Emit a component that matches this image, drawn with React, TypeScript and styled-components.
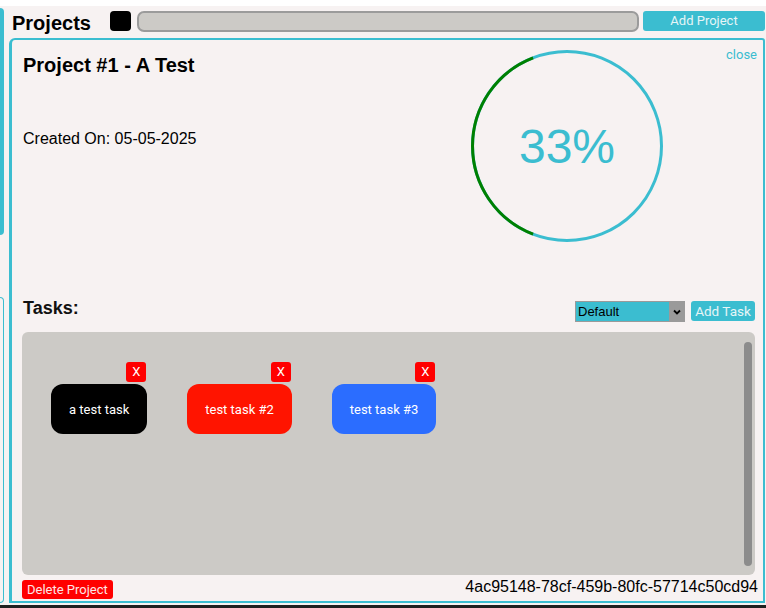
import styled, { createGlobalStyle } from "styled-components";

const CYAN = "#3bbdd0";
const PAPER = "#f7f2f2";

const tasks = [
  { id: 1, name: "a test task", color: "#000000" },
  { id: 2, name: "test task #2", color: "#ff1400" },
  { id: 3, name: "test task #3", color: "#2b6dff" },
];

const GlobalStyle = createGlobalStyle`
  body {
    margin: 0;
    background: #ffffff;
    font-family: "Liberation Sans", Arial, sans-serif;
  }
`;

const App = () => {
  return (
    <>
      <GlobalStyle />
      <StyledPage>
        <StyledBody>
          <StyledRail>
            <StyledRailFill />
            <StyledRailOutline />
          </StyledRail>
          <StyledColumn>
            <StyledHeader>
              <StyledTitle>Projects</StyledTitle>
              <StyledSwatch />
              <StyledSearch />
              <StyledButton width={122}>Add Project</StyledButton>
            </StyledHeader>
            <StyledModal>
              <StyledTop>
                <StyledInfo>
                  <StyledProjectName>Project #1 - A Test</StyledProjectName>
                  <StyledCreated>Created On: 05-05-2025</StyledCreated>
                </StyledInfo>
                <StyledRing>
                  <svg width="200" height="200" viewBox="0 0 200 200">
                    <circle cx="100" cy="100" r="94.5" fill="none" stroke={CYAN} strokeWidth="3" />
                    <path
                      d="M 66.1 11.8 A 94.5 94.5 0 0 0 66.1 188.2"
                      fill="none"
                      stroke="#008000"
                      strokeWidth="3"
                    />
                  </svg>
                  <StyledPercent>33%</StyledPercent>
                </StyledRing>
                <StyledClose>close</StyledClose>
              </StyledTop>
              <StyledTasksHeader>
                <StyledTasksTitle>Tasks:</StyledTasksTitle>
                <StyledSelect>
                  <span>Default</span>
                  <StyledSelectArrow>
                    <svg width="8" height="6" viewBox="0 0 8 6">
                      <path d="M1 1.5 L4 4.5 L7 1.5" fill="none" stroke="#000" strokeWidth="1.8" />
                    </svg>
                  </StyledSelectArrow>
                </StyledSelect>
                <StyledAddTask width={64}>Add Task</StyledAddTask>
              </StyledTasksHeader>
              <StyledTaskArea>
                <StyledTaskList>
                  {tasks.map((task) => (
                    <StyledTaskItem key={task.id}>
                      <StyledRemove>X</StyledRemove>
                      <StyledCard color={task.color}>{task.name}</StyledCard>
                    </StyledTaskItem>
                  ))}
                </StyledTaskList>
                <StyledScrollThumb />
              </StyledTaskArea>
              <StyledFooter>
                <StyledDelete>Delete Project</StyledDelete>
                <StyledUuid>4ac95148-78cf-459b-80fc-57714c50cd94</StyledUuid>
              </StyledFooter>
            </StyledModal>
          </StyledColumn>
        </StyledBody>
        <StyledBottomBar />
      </StyledPage>
    </>
  );
};

const StyledPage = styled.div`
  height: 608px;
  display: flex;
  flex-direction: column;
  padding-top: 6px;
  box-sizing: border-box;
`;

const StyledBody = styled.div`
  flex: 1;
  display: flex;
  background: ${PAPER};
  min-height: 0;
`;

const StyledRail = styled.div`
  width: 4px;
  display: flex;
  flex-direction: column;
  padding-top: 2px;
`;

const StyledRailFill = styled.div`
  height: 227px;
  background: ${CYAN};
  border-radius: 0 4px 4px 0;
`;

const StyledRailOutline = styled.div`
  flex: 1;
  margin-top: 62px;
  margin-bottom: 2px;
  border: 1px solid ${CYAN};
  border-left: none;
  border-radius: 0 5px 5px 0;
`;

const StyledColumn = styled.div`
  flex: 1;
  display: flex;
  flex-direction: column;
  padding-left: 5px;
  margin-right: 1px;
  min-width: 0;
`;

const StyledHeader = styled.div`
  height: 32px;
  display: flex;
  align-items: flex-start;
  padding-top: 5px;
  padding-left: 3px;
  box-sizing: border-box;
`;

const StyledTitle = styled.h1`
  margin: 0;
  font-size: 20px;
  line-height: 24px;
  font-weight: bold;
  color: #000;
`;

const StyledSwatch = styled.div`
  width: 21px;
  height: 20px;
  margin-left: 19px;
  background: #000;
  border-radius: 4px;
`;

const StyledSearch = styled.div`
  flex: 1;
  height: 21px;
  margin: 0 4px 0 6px;
  background: #cccac6;
  border: 2px solid #9b9b9b;
  border-radius: 7px;
  box-sizing: border-box;
`;

const StyledButton = styled.div<{ width: number }>`
  width: ${({ width }) => width}px;
  height: 20px;
  background: ${CYAN};
  color: #e6f5f7;
  font-family: Roboto, "Liberation Sans", sans-serif;
  font-size: 13px;
  line-height: 20px;
  text-align: center;
  border-radius: 3px;
`;

const StyledAddTask = styled(StyledButton)`
  margin-top: 4px;
  font-size: 13.5px;
`;

const StyledModal = styled.div`
  flex: 1;
  display: flex;
  flex-direction: column;
  border: 2px solid ${CYAN};
  border-left-width: 3px;
  border-radius: 6px 3px 0 0;
  margin-bottom: 2px;
  min-height: 0;
`;

const StyledTop = styled.div`
  height: 257px;
  display: grid;
  grid-template-columns: 1fr 200px 96px;
`;

const StyledInfo = styled.div`
  padding: 13px 0 0 11px;
`;

const StyledProjectName = styled.h2`
  margin: 0;
  font-size: 20px;
  line-height: 24px;
  font-weight: bold;
  color: #000;
`;

const StyledCreated = styled.p`
  margin: 53px 0 0;
  font-size: 16px;
  line-height: 18px;
  color: #000;
`;

const StyledRing = styled.div`
  position: relative;
  width: 200px;
  height: 200px;
  margin-top: 6px;
  display: flex;
  align-items: center;
  justify-content: center;
  svg {
    position: absolute;
    inset: 0;
  }
`;

const StyledPercent = styled.span`
  font-size: 48px;
  color: ${CYAN};
  line-height: 1;
  padding-top: 1px;
`;

const StyledClose = styled.div`
  justify-self: end;
  padding: 7px 6px 0 0;
  font-family: Roboto, "Liberation Sans", sans-serif;
  font-size: 13px;
  line-height: 16px;
  color: ${CYAN};
`;

const StyledTasksHeader = styled.div`
  height: 35px;
  display: flex;
  align-items: flex-start;
  padding: 0 8px 0 11px;
  box-sizing: border-box;
`;

const StyledTasksTitle = styled.h3`
  margin: 1px auto 0 0;
  font-size: 18px;
  line-height: 21px;
  font-weight: bold;
  color: #111;
`;

const StyledSelect = styled.div`
  width: 110px;
  height: 21px;
  margin: 4px 6px 0 0;
  display: flex;
  align-items: center;
  background: ${CYAN};
  border: 1px solid #9a9a9a;
  box-sizing: border-box;
  font-size: 13px;
  color: #000;
  span {
    flex: 1;
    padding-left: 2px;
  }
`;

const StyledSelectArrow = styled.div`
  width: 15px;
  height: 100%;
  background: #9a9a9a;
  display: flex;
  align-items: center;
  justify-content: center;
`;

const StyledTaskArea = styled.div`
  flex: 1;
  margin: 0 8px 0 10px;
  display: flex;
  background: #cccac6;
  border-radius: 6px;
  padding: 10px 3px 9px 29px;
  min-height: 0;
`;

const StyledTaskList = styled.div`
  flex: 1;
  display: flex;
  align-items: flex-start;
  gap: 40px;
  padding-top: 20px;
`;

const StyledTaskItem = styled.div`
  display: flex;
  flex-direction: column;
  align-items: flex-end;
  gap: 2px;
`;

const StyledRemove = styled.div`
  width: 20px;
  height: 20px;
  margin-right: 1px;
  background: #ff0000;
  border-radius: 3px;
  color: #fff;
  font-family: Roboto, "Liberation Sans", sans-serif;
  font-size: 13px;
  line-height: 20px;
  text-align: center;
`;

const StyledCard = styled.div<{ color: string }>`
  height: 50px;
  padding: 0 18px;
  display: flex;
  align-items: center;
  background: ${({ color }) => color};
  border-radius: 12px;
  color: #fff;
  font-family: Roboto, "Liberation Sans", sans-serif;
  font-size: 13px;
  white-space: nowrap;
`;

const StyledScrollThumb = styled.div`
  width: 8px;
  background: #8c8c8c;
  border-radius: 4px;
`;

const StyledFooter = styled.div`
  display: flex;
  align-items: center;
  justify-content: space-between;
  margin-top: 5px;
  padding: 0 5px 2px 10px;
`;

const StyledDelete = styled.div`
  height: 19px;
  padding: 0 5px;
  background: #ff0000;
  border-radius: 3px;
  color: #fde6e6;
  font-family: Roboto, "Liberation Sans", sans-serif;
  font-size: 13px;
  line-height: 19px;
`;

const StyledUuid = styled.div`
  font-size: 16px;
  color: #000;
  margin-top: -5px;
`;

const StyledBottomBar = styled.div`
  height: 3px;
  background: #1f1f1f;
`;

export default App;
